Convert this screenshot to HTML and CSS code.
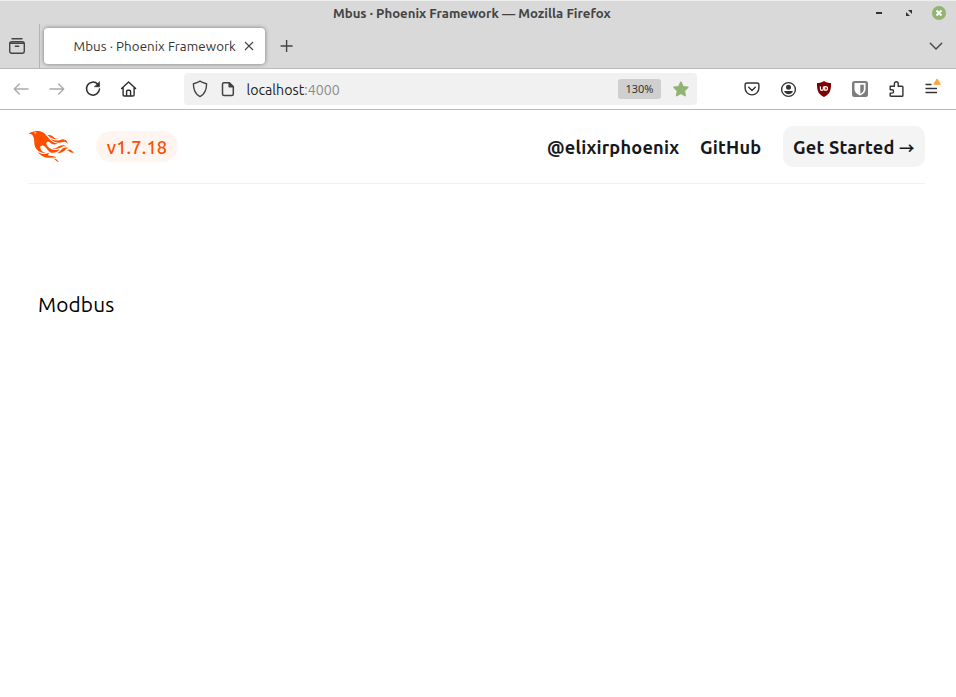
FILE: index.html
```html
<!DOCTYPE html>
<html lang="en">
<head>
<meta charset="utf-8">
<title>Mbus · Phoenix Framework</title>
<link rel="stylesheet" href="styles.css">
</head>
<body>
<div class="window">
  <div class="titlebar">
    <span class="window-title">Mbus · Phoenix Framework — Mozilla Firefox</span>
    <div class="window-controls">
      <svg width="14" height="14" viewBox="0 0 14 14"><path d="M4 7h6" stroke="#333" stroke-width="2"/></svg>
      <svg width="14" height="14" viewBox="0 0 14 14"><path d="M6 4h4v4zM4 6v4h4z" fill="#333"/></svg>
      <svg width="14" height="14" viewBox="0 0 14 14"><circle cx="7" cy="7" r="7" fill="#92b372"/><path d="M4.500 4.500l5 5m0-5l-5 5" stroke="#fff" stroke-width="1.900"/></svg>
    </div>
  </div>
  <div class="tabstrip">
    <div class="firefox-view">
      <svg width="18" height="18" viewBox="0 0 18 18" fill="none" stroke="#444" stroke-width="1.400" stroke-linecap="round"><path d="M4 1.700h10"/><rect x="1.700" y="4.700" width="14.600" height="11.600" rx="2.200"/><path d="M2 6.200h14M7.300 9.300h3.400"/></svg>
    </div>
    <div class="tab">
      <span class="tab-label">Mbus · Phoenix Framework</span>
      <svg width="10" height="10" viewBox="0 0 10 10" fill="none" stroke="#444" stroke-width="1.100"><path d="M1 1l8 8M9 1l-8 8"/></svg>
    </div>
    <svg class="new-tab" width="14" height="14" viewBox="0 0 14 14" fill="none" stroke="#444" stroke-width="1.400"><path d="M6.600 1v12M.6 7h12"/></svg>
    <svg class="list-tabs" width="14" height="9" viewBox="0 0 14 9" fill="none" stroke="#444" stroke-width="1.400" stroke-linecap="round"><path d="M1.300 1.300L7 7l5.700-5.700"/></svg>
  </div>
  <div class="toolbar">
    <div class="nav-buttons">
      <svg width="18" height="18" viewBox="0 0 18 18" fill="none" stroke="#aaa" stroke-width="1.400" stroke-linecap="round" stroke-linejoin="round"><path d="M16 9H2.300M7.300 4L2.300 9l5 5"/></svg>
      <svg width="18" height="18" viewBox="0 0 18 18" fill="none" stroke="#aaa" stroke-width="1.400" stroke-linecap="round" stroke-linejoin="round"><path d="M2 9h13.700M10.700 4l5 5-5 5"/></svg>
      <svg width="18" height="18" viewBox="0 0 18 18" fill="none" stroke="#2c2c2c" stroke-width="1.500" stroke-linecap="round"><path d="M13.600 4A6.500 6.500 0 1 0 15.500 9"/><path d="M15.500 2v4.800h-4.800z" fill="#2c2c2c" stroke-width=".6"/></svg>
      <svg width="18" height="18" viewBox="0 0 18 18" fill="none" stroke="#2c2c2c" stroke-width="1.400" stroke-linecap="round" stroke-linejoin="round"><path d="M1.600 8.600L8.600 2l7 6.600M3.100 7.500v7.300q0 1.200 1.200 1.200h8.600q1.200 0 1.200-1.200V7.500M6.600 16v-4.500q0-1.200 1.200-1.200h1.600q1.200 0 1.200 1.200V16"/></svg>
    </div>
    <div class="urlbar">
      <svg width="16" height="18" viewBox="0 0 16 18" fill="none" stroke="#444" stroke-width="1.400" stroke-linejoin="round"><path d="M8 1.200C6 2.500 3.800 3.300 1.400 3.800 1.400 10 3 14.200 8 16.600c5-2.400 6.600-6.600 6.600-12.800C12.200 3.300 10 2.500 8 1.200z"/></svg>
      <svg class="page-icon" width="14" height="16" viewBox="0 0 14 16" fill="none" stroke="#444" stroke-width="1.500" stroke-linejoin="round"><path d="M3 1.700h5.200l4.100 4.100V13q0 1.500-1.500 1.500H3q-1.500 0-1.500-1.500V3.200Q1.500 1.700 3 1.700z"/><path d="M8.200 1.700v4.100h4.100z" fill="#444"/></svg>
      <span class="url">localhost<span class="port">:4000</span></span>
      <span class="zoom-level">130%</span>
      <svg class="bookmark" width="17" height="16" viewBox="0 0 17 16"><path d="M8.900 1.100l2.100 4.500 4.900.700-3.500 3.500.800 4.900-4.300-2.300-4.300 2.300.800-4.900L1.900 6.300l4.900-.700z" fill="#92b372" stroke="#92b372" stroke-width="1.400" stroke-linejoin="round"/></svg>
    </div>
    <div class="extensions">
      <svg width="18" height="18" viewBox="0 0 18 18" fill="none" stroke="#333" stroke-width="1.400" stroke-linecap="round" stroke-linejoin="round"><path d="M4 3h10q1.900 0 1.900 1.900V8a6.900 6.900 0 0 1-13.800 0V4.900Q2.100 3 4 3z"/><path d="M5.700 7.300L9 10.500l3.300-3.200"/></svg>
      <svg width="18" height="18" viewBox="0 0 18 18"><circle cx="9.500" cy="9.500" r="6.900" fill="none" stroke="#333" stroke-width="1.400"/><circle cx="9.500" cy="7.300" r="2.500" fill="#333"/><path d="M5 11h9q-1.500 3.300-4.500 3.300T5 11z" fill="#333"/></svg>
      <svg width="18" height="18" viewBox="0 0 18 18"><path d="M9 1C7 2.500 4.500 3 2 3c0 7 .4 10.500 7 14 6.600-3.500 7-7 7-14-2.500 0-5-.5-7-2z" fill="#800000"/><path d="M5.400 6.500v2.200q0 1.600 1.500 1.600t1.500-1.600V6.500M9.700 6.600v3.600h.8q2 0 2-1.800t-2-1.800z" fill="none" stroke="#fff" stroke-width="1.200"/></svg>
      <svg width="18" height="18" viewBox="0 0 18 18"><rect x="1" y="1" width="16" height="16" rx="2.500" fill="#7d7d7d"/><path d="M3.500 3h11v6.500q0 3.700-5.500 6-5.500-2.300-5.500-6z" fill="#fff"/><path d="M9.300 4.700h3.500v5q0 2-3.500 4z" fill="#7d7d7d"/></svg>
      <svg width="18" height="18" viewBox="0 0 18 18" fill="none" stroke="#333" stroke-width="1.400" stroke-linejoin="round"><path d="M3.200 7.500V6.200h4.200V3.700a1.900 1.900 0 0 1 3.800 0v2.500h3.800q.9 0 .9.900v8.300q0 .9-.9.900H4.100q-.9 0-.9-.9v-2.300h1.700a1.700 1.700 0 0 0 0-3.400H3.200z"/></svg>
      <svg class="menu" width="18" height="22" viewBox="0 0 18 22"><path d="M2.500 8.500h6M2.500 12.500h11.500M2.500 16.500h11.500" stroke="#333" stroke-width="1.300"/><path d="M14.100 3L17.400 8.300h-6.600z" fill="#ffa436" stroke="#ffa436" stroke-linejoin="round"/></svg>
    </div>
  </div>
  <main class="page">
    <header class="site-header">
      <svg class="logo" viewBox="0 0 71 48" fill="#fd4f00"><path d="m26.371 33.477-.552-.1c-3.920-.729-6.397-3.100-7.570-6.829-.733-2.324.597-4.035 3.035-4.148 1.995-.092 3.362 1.055 4.570 2.390 1.557 1.720 2.984 3.558 4.514 5.305 2.202 2.515 4.797 4.134 8.347 3.634 3.183-.448 5.958-1.725 8.371-3.828.363-.316.761-.592 1.144-.886l-.241-.284c-2.027.63-4.093.841-6.205.735-3.195-.16-6.240-.828-8.964-2.582-2.486-1.601-4.319-3.746-5.190-6.611-.704-2.315.736-3.934 3.135-3.600.948.133 1.746.56 2.463 1.165.583.493 1.143 1.015 1.738 1.493 2.800 2.250 6.712 2.375 10.265-.068-5.842-.026-9.817-3.240-13.308-7.313-1.366-1.594-2.700-3.216-4.095-4.785-2.698-3.036-5.692-5.710-9.790-6.623C12.800-.623 7.745.14 2.893 2.361 1.926 2.804.997 3.319 0 4.149c.494 0 .763.006 1.032 0 2.446-.064 4.280 1.023 5.602 3.024.962 1.457 1.415 3.104 1.761 4.798.513 2.515.247 5.078.544 7.605.761 6.494 4.080 11.026 10.260 13.346 2.267.852 4.591 1.135 7.172.555ZM10.751 3.852c-.976.246-1.756-.148-2.560-.962 1.377-.343 2.592-.476 3.897-.528-.107.848-.607 1.306-1.336 1.490Zm32.002 37.924c-.085-.626-.62-.901-1.040-1.228-1.857-1.446-4.030-1.958-6.333-2-1.375-.026-2.735-.128-4.031-.61-.595-.22-1.260-.505-1.244-1.272.015-.78.693-1 1.310-1.184.505-.15 1.026-.247 1.600-.382-1.460-.936-2.886-1.065-4.787-.3-2.993 1.202-5.943 1.060-8.926-.017-1.684-.608-3.179-1.563-4.735-2.408l-.077.057c1.290 2.115 3.034 3.817 5.004 5.271 3.793 2.800 7.936 4.471 12.784 3.730A66.714 66.714 0 0 1 37 40.877c1.980-.16 3.866.398 5.753.899Zm-9.140-30.345c-.105-.076-.206-.266-.42-.069 1.745 2.360 3.985 4.098 6.683 5.193 4.354 1.767 8.773 2.070 13.293.51 3.510-1.210 6.033-.028 7.343 3.380.19-3.955-2.137-6.837-5.843-7.401-2.084-.318-4.010.373-5.962.94-5.434 1.575-10.485.798-15.094-2.553Zm27.085 15.425c.708.059 1.416.123 2.124.185-1.600-1.405-3.550-1.517-5.523-1.404-3.003.17-5.167 1.903-7.140 3.972-1.739 1.824-3.310 3.870-5.903 4.604.043.078.054.117.066.117.35.005.699.021 1.047.005 3.768-.17 7.317-.965 10.140-3.700.89-.86 1.685-1.817 2.544-2.710.716-.746 1.584-1.159 2.645-1.070Zm-8.753-4.670c-2.812.246-5.254 1.409-7.548 2.943-1.766 1.180-3.654 1.738-5.776 1.370-.374-.066-.75-.114-1.124-.17l-.013.156c.135.07.265.151.405.207.354.14.702.308 1.070.395 4.083.971 7.992.474 11.516-1.803 2.221-1.435 4.521-1.707 7.013-1.336.252.038.503.083.756.107.234.022.479.255.795.003-2.179-1.574-4.526-2.096-7.094-1.872Zm-10.049-9.544c1.475.051 2.943-.142 4.486-1.059-.452.04-.643.04-.827.076-2.126.424-4.033-.04-5.733-1.383-.623-.493-1.257-.974-1.889-1.457-2.503-1.914-5.374-2.555-8.514-2.500.05.154.054.26.108.315 3.417 3.455 7.371 5.836 12.369 6.008Zm24.727 17.731c-2.114-2.097-4.952-2.367-7.578-.537 1.738.078 3.043.632 4.101 1.728.374.388.763.768 1.182 1.106 1.600 1.290 4.311 1.352 5.896.155-1.861-.726-1.861-.726-3.601-2.452Zm-21.058 16.060c-1.858-3.460-4.981-4.240-8.590-4.008a9.667 9.667 0 0 1 2.977 1.390c.84.586 1.547 1.311 2.243 2.055 1.380 1.473 3.534 2.376 4.962 2.070-.656-.412-1.238-.848-1.592-1.507Z"/></svg>
      <span class="version">v1.7.18</span>
      <nav class="links">
        <a class="link-handle">@elixirphoenix</a>
        <a class="link-github">GitHub</a>
        <a class="button">Get Started <span class="arrow">→</span></a>
      </nav>
    </header>
    <p class="content">Modbus</p>
  </main>
</div>
</body>
</html>
```
FILE: styles.css
```css
* { box-sizing: border-box; }
body {
  margin: 0;
  background: #fff;
  font-family: Ubuntu, "Noto Sans", sans-serif;
  white-space: nowrap;
}
svg { display: block; flex: none; }
.window { height: 697px; overflow: hidden; }
.titlebar {
  height: 24px;
  border-top: 1px solid #efefef;
  background: #d9d9d9;
  display: flex;
  align-items: center;
  padding: 0 10px 0 333px;
}
.window-title {
  font-size: 13.2px;
  font-weight: 600;
  color: #444;
}
.window-controls { display: flex; gap: 16px; margin-left: auto; }
.tabstrip {
  height: 45px;
  background: #d9d9d9;
  border-bottom: 1px solid #b9b9b9;
  display: flex;
  align-items: center;
}
.firefox-view {
  width: 40px;
  height: 44px;
  padding-left: 8px;
  border-right: 1px solid #b4b4b4;
  display: flex;
  align-items: center;
}
.tab {
  width: 221px;
  height: 36px;
  margin-left: 4px;
  padding: 0 11px 0 29.500px;
  background: #fff;
  border-radius: 4px;
  box-shadow: 0 0 4px rgba(0, 0, 0, .45);
  display: flex;
  align-items: center;
  justify-content: space-between;
}
.tab-label { font-size: 13.33px; letter-spacing: .06px; color: #333; }
.new-tab { margin-left: 15px; }
.list-tabs { margin-left: auto; margin-right: 13px; }
.toolbar {
  height: 41px;
  border-bottom: 1px solid #b9b9b9;
  display: flex;
  align-items: center;
}
.nav-buttons { display: flex; gap: 18px; padding-left: 12px; width: 184px; }
.urlbar {
  width: 513px;
  height: 32px;
  padding: 0 8px;
  background: #f1f1f1;
  border-radius: 4px;
  display: flex;
  align-items: center;
}
.page-icon { margin-left: 13px; }
.url { margin: 1px 0 0 11.500px; font-size: 14.200px; color: #222; }
.port { color: #8b8b8b; }
.zoom-level {
  width: 43px;
  height: 20px;
  margin-left: auto;
  border-radius: 3px;
  background: #cfcfcf;
  color: #333;
  font: 11px/20px "Noto Sans", sans-serif;
  text-align: center;
}
.bookmark { margin-left: 11px; }
.extensions { display: flex; align-items: center; gap: 18px; margin-left: 46px; }
.menu { margin-top: -4px; }
.page { padding: 0 31px 0 28px; }
.site-header {
  height: 74px;
  border-bottom: 1px solid #f2f2f2;
  display: flex;
  align-items: center;
}
.logo { width: 47px; height: 31px; }
.version {
  width: 82px;
  height: 31px;
  margin-left: 21px;
  border-radius: 16px;
  background: #fff5f0;
  color: #fd4f00;
  font-size: 18.2px;
  font-weight: 500;
  letter-spacing: .2px;
  line-height: 32px;
  text-align: center;
}
.links {
  display: flex;
  align-items: center;
  margin-left: auto;
  font-size: 18.2px;
  font-weight: 700;
  letter-spacing: .19px;
  line-height: 42px;
  color: #18181b;
}
.link-handle { width: 153px; }
.link-github { width: 83px; }
.button {
  width: 142px;
  height: 41px;
  padding-left: 10px;
  border-radius: 10px;
  background: #f4f4f4;
}
.arrow {
  font-family: "Noto Sans CJK JP", sans-serif;
  font-size: 15.500px;
  line-height: 1;
  letter-spacing: 0;
}
.content {
  margin: 105px 0 0 10px;
  font-size: 20.8px;
  letter-spacing: .15px;
  line-height: 31px;
  color: #000;
}
```
